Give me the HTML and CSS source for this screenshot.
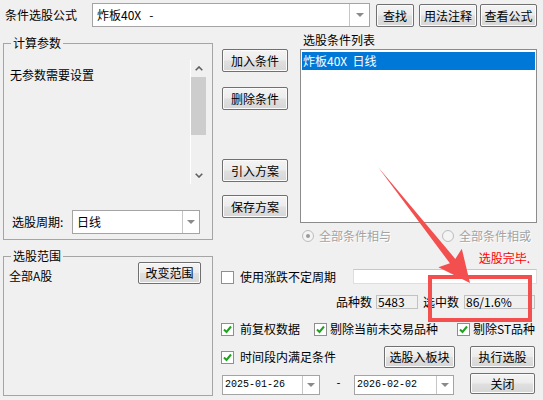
FILE: index.html
```html
<!DOCTYPE html>
<html lang="zh-CN">
<head>
<meta charset="utf-8">
<title>条件选股</title>
<link rel="stylesheet" href="styles.css">
</head>
<body>
<div class="dlg">
  <div class="toprow">
    <span class="lbl-formula">条件选股公式</span>
    <div class="combo combo-formula"><span class="combo-val">炸板40X&nbsp;&nbsp;&nbsp;-</span><span class="combo-drop"><i class="tri"></i></span></div>
    <button class="btn btn-find">查找</button>
    <button class="btn btn-usage">用法注释</button>
    <button class="btn btn-view">查看公式</button>
  </div>

  <div class="main">
    <div class="leftcol">
      <div class="group group-params">
        <div class="group-title">计算参数</div>
        <div class="params">
          <div class="params-text">无参数需要设置</div>
          <div class="vscroll">
            <div class="sb-btn"><svg width="8" height="5" viewBox="0 0 8 5"><polyline points="0.7,4.3 4,1 7.3,4.3" fill="none" stroke="#606060" stroke-width="1.6"/></svg></div>
            <div class="sb-thumb"></div>
            <div class="sb-track"></div>
            <div class="sb-btn"><svg width="8" height="5" viewBox="0 0 8 5"><polyline points="0.7,0.7 4,4 7.3,0.7" fill="none" stroke="#606060" stroke-width="1.6"/></svg></div>
          </div>
        </div>
        <div class="period-row">
          <span class="period-lbl">选股周期:</span>
          <div class="combo combo-period"><span class="combo-val">日线</span><span class="combo-drop"><i class="tri"></i></span></div>
        </div>
      </div>

      <div class="group group-range">
        <div class="group-title">选股范围</div>
        <div class="range-row">
          <span class="range-text">全部A股</span>
          <button class="btn btn-range">改变范围</button>
        </div>
      </div>
    </div>

    <div class="rightcol">
      <div class="upper">
        <div class="midbtns">
          <button class="btn btn-mid">加入条件</button>
          <button class="btn btn-mid b2">删除条件</button>
          <button class="btn btn-mid b3">引入方案</button>
          <button class="btn btn-mid b4">保存方案</button>
        </div>
        <div class="listcol">
          <div class="list-lbl">选股条件列表</div>
          <div class="listbox">
            <div class="list-item sel">炸板40X&nbsp;&nbsp;日线</div>
          </div>
          <div class="radios">
            <span class="radio on"><i></i></span><span class="rlabel">全部条件相与</span>
            <span class="radio r2"></span><span class="rlabel">全部条件相或</span>
          </div>
        </div>
      </div>

      <div class="status">选股完毕.</div>

      <div class="row row-updown">
        <span class="chk"></span><span class="clabel">使用涨跌不定周期</span>
        <span class="editbox"></span>
      </div>

      <div class="counts">
        <span class="cnt-lbl">品种数</span>
        <span class="numbox nb1">5483</span>
        <span class="cnt-lbl cl2">选中数</span>
        <span class="numbox nb2">86/1.6%</span>
      </div>

      <div class="row opts">
        <span class="chk on"><svg width="11" height="11" viewBox="0 0 11 11"><polyline points="2,5.5 4.5,8 9,2.5" fill="none" stroke="#21a121" stroke-width="2"/></svg></span><span class="clabel">前复权数据</span>
        <span class="chk on c2"><svg width="11" height="11" viewBox="0 0 11 11"><polyline points="2,5.5 4.5,8 9,2.5" fill="none" stroke="#21a121" stroke-width="2"/></svg></span><span class="clabel l2">剔除当前未交易品种</span>
        <span class="chk on c3"><svg width="11" height="11" viewBox="0 0 11 11"><polyline points="2,5.5 4.5,8 9,2.5" fill="none" stroke="#21a121" stroke-width="2"/></svg></span><span class="clabel l2">剔除ST品种</span>
      </div>

      <div class="row row-exec">
        <span class="chk on"><svg width="11" height="11" viewBox="0 0 11 11"><polyline points="2,5.5 4.5,8 9,2.5" fill="none" stroke="#21a121" stroke-width="2"/></svg></span><span class="clabel">时间段内满足条件</span>
        <button class="btn btn-block">选股入板块</button>
        <button class="btn btn-exec">执行选股</button>
      </div>

      <div class="row row-dates">
        <div class="combo combo-date d1"><span class="combo-val">2025-01-26</span><span class="combo-drop"><i class="tri"></i></span></div>
        <span class="dash">-</span>
        <div class="combo combo-date d2"><span class="combo-val">2026-02-02</span><span class="combo-drop"><i class="tri"></i></span></div>
        <button class="btn btn-close">关闭</button>
      </div>
    </div>
  </div>

  <svg class="annot" width="543" height="400" viewBox="0 0 543 400">
    <rect x="430" y="277" width="100" height="43" fill="none" stroke="#f44f4f" stroke-width="4"/>
    <polygon points="378,167 455.3,258.9 461.8,248.7 470,283 438.4,267.3 449.9,263.3" fill="#f44f4f"/>
  </svg>
</div>
</body>
</html>
```

FILE: styles.css
```css
* { box-sizing: border-box; }
html, body { margin: 0; padding: 0; }
body {
  background: #f0f0f0;
  font-family: "Noto Sans CJK SC", "Microsoft YaHei", sans-serif;
  font-size: 12px;
  color: #000;
  width: 543px;
  height: 400px;
  overflow: hidden;
}
.dlg { position: relative; width: 543px; height: 400px; }

/* generic controls */
.btn {
  font: inherit;
  font-size: 12px;
  color: #000;
  padding: 0;
  height: 23px;
  line-height: 20px;
  border: 1px solid #707070;
  border-radius: 2px;
  background: linear-gradient(#f4f4f4, #ececec 48%, #e0e0e0 52%, #d6d6d6);
  box-shadow: inset 0 0 0 1px #fbfbfb;
  white-space: nowrap;
  flex: none;
}
.combo { display: flex; background: #fff; border: 1px solid #a4a4a4; flex: none; }
.combo-val { flex: 1; white-space: nowrap; overflow: hidden; }
.combo-drop {
  display: flex; align-items: center; justify-content: center;
  border-left: 1px solid #c6c6c6;
}
.tri {
  display: block; width: 0; height: 0;
  border-left: 4px solid transparent;
  border-right: 4px solid transparent;
  border-top: 4px solid #8a8a8a;
}

/* top row */
.toprow { display: flex; align-items: flex-start; height: 30px; padding-left: 5px; }
.lbl-formula { flex: 0 0 87px; margin-top: 7px; line-height: 16px; }
.combo-formula { margin-top: 3px; width: 278px; height: 24px; }
.combo-formula .combo-val { padding-left: 4px; line-height: 22px; }
.combo-formula .combo-drop { width: 20px; }
.btn-find { margin: 4px 0 0 6px; width: 38px; }
.btn-usage { margin: 4px 0 0 5px; width: 58px; }
.btn-view { margin: 4px 0 0 3px; width: 57px; }

/* main */
.main { display: flex; }
.leftcol { flex: none; width: 210px; margin-left: 3px; }
.group { border: 1px solid #a5a5a5; }
.group-title {
  width: fit-content;
  margin: -9px 0 0 7px;
  padding: 0 2px;
  background: #f0f0f0;
  line-height: 16px;
}
.group-params { margin-top: 13px; height: 197px; }
.params { display: flex; margin: 9px 5px 0 4px; height: 124px; }
.params-text { flex: 1; padding: 8px 0 0 2px; line-height: 14px; }
.vscroll { width: 17px; border-left: 1px solid #fff; display: flex; flex-direction: column; }
.sb-btn { height: 17px; display: flex; align-items: center; justify-content: center; }
.sb-thumb { height: 58px; background: #cdcdcd; margin-right: 1px; }
.sb-track { flex: 1; }
.period-row { display: flex; align-items: center; margin-top: 26px; padding-left: 8px; height: 24px; }
.period-lbl { width: 60px; line-height: 24px; }
.combo-period { width: 128px; height: 24px; }
.combo-period .combo-val { padding-left: 4px; line-height: 22px; }
.combo-period .combo-drop { width: 17px; }

.group-range { margin-top: 16px; height: 140px; }
.range-row { display: flex; justify-content: space-between; align-items: flex-start; margin-top: -2px; padding: 0 11px 0 5px; }
.range-text { margin-top: 6px; line-height: 15px; }
.btn-range { width: 63px; height: 22px; }

/* right column */
.rightcol { flex: 1; padding-left: 8px; }
.upper { display: flex; }
.midbtns { flex: none; display: flex; flex-direction: column; width: 66px; margin-left: 1px; padding-top: 19px; }
.btn-mid { width: 66px; height: 23px; }
.b2 { margin-top: 15px; }
.b3 { margin-top: 49px; }
.b4 { margin-top: 13px; }
.listcol { flex: none; margin-left: 12px; width: 237px; }
.list-lbl { height: 19px; line-height: 19px; padding-left: 3px; }
.listbox { height: 174px; border: 1px solid #8c8c8c; background: #fff; padding: 2px 1px; }
.list-item { height: 18px; line-height: 18px; padding-left: 1px; }
.list-item.sel { background: #0078d7; color: #fff; }
.radios { display: flex; align-items: center; margin-top: 7px; height: 12px; }
.radio {
  flex: none; display: flex; align-items: center; justify-content: center;
  width: 12px; height: 12px; border-radius: 50%;
  border: 1px solid #bcbcbc; background: #f4f4f4; margin-left: 2px;
}
.radio.on i { display: block; width: 4px; height: 4px; border-radius: 50%; background: #9a9a9a; }
.radio.r2 { margin-left: 51px; }
.rlabel { margin-left: 5px; line-height: 14px; color: #a3a3a3; text-shadow: 1px 1px 0 #fff; white-space: nowrap; }

.status { margin-top: 9px; line-height: 14px; text-align: right; padding-right: 13px; color: #ff0000; }

.row { display: flex; align-items: center; }
.chk {
  flex: none; width: 13px; height: 13px;
  border: 1px solid #8f8f8f; background: #fff;
  display: flex; align-items: center; justify-content: center;
}
.clabel { margin-left: 6px; line-height: 14px; white-space: nowrap; }
.row-updown { margin-top: 4px; height: 16px; }
.editbox { align-self: flex-start; margin-left: 17px; width: 184px; height: 15px; background: #fff; border: 1px solid #dedede; border-top-color: #c8c8c8; }

.counts { display: flex; justify-content: flex-end; align-items: center; margin-top: 10px; height: 14px; padding-right: 8px; }
.cnt-lbl { line-height: 14px; }
.cl2 { margin-left: 5px; }
.numbox { height: 14px; line-height: 12px; padding-left: 1px; border: 1px solid #c2c2c2; background: #f0f0f0; margin-left: 4px; white-space: nowrap; }
.nb1 { width: 42px; }
.nb2 { width: 71px; margin-left: 5px; }

.opts { margin-top: 13px; height: 14px; }
.c2 { margin-left: 14px; }
.c3 { margin-left: 19px; }
.l2 { margin-left: 3px; }

.row-exec { margin-top: 10px; height: 22px; }
.btn-block { margin-left: 48px; width: 71px; height: 22px; }
.btn-exec { margin-left: 15px; width: 65px; height: 22px; }

.row-dates { margin-top: 5px; height: 22px; }
.combo-date { align-self: flex-end; height: 20px; }
.combo-date .combo-val { padding-left: 2px; line-height: 18px; font-family: "Liberation Mono", monospace; font-size: 10px; }
.combo-date .combo-drop { width: 17px; }
.d1 { margin-left: 1px; width: 98px; }
.d2 { width: 100px; }
.dash { flex: none; width: 34px; padding-left: 3px; text-align: center; line-height: 14px; font-family: "Liberation Mono", monospace; font-size: 10px; }
.btn-close { align-self: flex-start; margin-left: 16px; width: 65px; height: 21px; line-height: 19px; }

/* annotation overlay */
.annot { position: absolute; left: 0; top: 0; pointer-events: none; }
```
